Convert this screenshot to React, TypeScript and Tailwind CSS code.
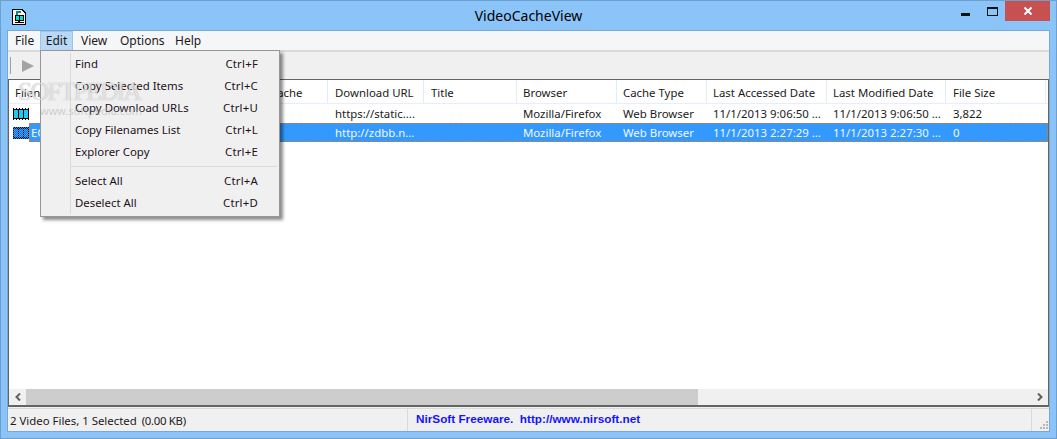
import React from "react";

const cols = [
  { w: "w-[121px]", p: "pl-[6px]", t: "Filename" },
  { w: "w-[134px]", p: "pl-[6px]", t: "Content Type" },
  { w: "w-[64px]", p: "pl-[6px]", t: "Cache" },
  { w: "w-[96px]", p: "pl-[7px]", t: "Download URL" },
  { w: "w-[93px]", p: "pl-[7px]", t: "Title" },
  { w: "w-[100px]", p: "pl-[6px]", t: "Browser" },
  { w: "w-[90px]", p: "pl-[6px]", t: "Cache Type" },
  { w: "w-[120px]", p: "pl-[6px]", t: "Last Accessed Date" },
  { w: "w-[119px]", p: "pl-[6px]", t: "Last Modified Date" },
  { w: "w-[100px]", p: "pl-[7px]", t: "File Size" },
];

const row1 = ["", "", "", "https://static....", "", "Mozilla/Firefox", "Web Browser", "11/1/2013 9:06:50 ...", "11/1/2013 9:06:50 ...", "3,822"];
const row2 = ["", "", "", "http://zdbb.n...", "", "Mozilla/Firefox", "Web Browser", "11/1/2013 2:27:29 ...", "11/1/2013 2:27:30 ...", "0"];

const items: ([string, string] | null)[] = [
  ["Find", "Ctrl+F"],
  ["Copy Selected Items", "Ctrl+C"],
  ["Copy Download URLs", "Ctrl+U"],
  ["Copy Filenames List", "Ctrl+L"],
  ["Explorer Copy", "Ctrl+E"],
  null,
  ["Select All", "Ctrl+A"],
  ["Deselect All", "Ctrl+D"],
];

function Film() {
  return (
    <svg width="16" height="12" viewBox="0 0 16 12" shapeRendering="crispEdges" className="shrink-0">
      <rect width="16" height="12" fill="#000" />
      {[1, 4, 7, 10, 13].map((x) => (
        <React.Fragment key={x}>
          <rect x={x} y="0" width="2" height="1" fill="#fff" />
          <rect x={x} y="11" width="2" height="1" fill="#fff" />
        </React.Fragment>
      ))}
      <rect x="1" y="2" width="4" height="8" fill="#1ec8f0" />
      <rect x="6" y="2" width="4" height="8" fill="#1ec8f0" />
      <rect x="11" y="2" width="4" height="8" fill="#1ec8f0" />
    </svg>
  );
}

function FilmSelected() {
  const cells: React.ReactNode[] = [];
  for (let y = 0; y < 12; y++) {
    for (let x = 0; x < 16; x++) {
      const frame = y >= 2 && y <= 9 && x % 5 !== 0;
      const odd = (x + y) % 2 === 1;
      const fill = odd ? (frame ? "#1c6fd6" : "#000") : frame ? "#3aa0ff" : "#2f8cf0";
      cells.push(<rect key={`${x}-${y}`} x={x} y={y} width="1" height="1" fill={fill} />);
    }
  }
  return (
    <svg width="16" height="12" viewBox="0 0 16 12" shapeRendering="crispEdges" className="shrink-0">
      {cells}
    </svg>
  );
}

function AppIcon() {
  return (
    <svg width="14" height="16" viewBox="0 0 14 16" shapeRendering="crispEdges">
      <path d="M0.5 0.5H10L13.5 4V15.5H0.5Z" fill="#f4f4e8" stroke="#000" />
      <path d="M4 2H9V4H6V6H4Z" fill="#0d8a8a" />
      <rect x="3.5" y="6.5" width="8" height="5" fill="#19d6d6" stroke="#000" />
      <rect x="7" y="7" width="1" height="5" fill="#000" />
      <rect x="3" y="13" width="9" height="1" fill="#000" />
      <rect x="6" y="12" width="2" height="1" fill="#000" />
    </svg>
  );
}

export default function App() {
  return (
    <div className="relative w-[1057px] h-[439px] overflow-hidden flex flex-col bg-[#8ac4f8] border border-[#6f9fcd] text-[11.4px] text-[#1a1a1a] [font-family:'Noto_Sans',sans-serif]">
      {/* Title bar */}
      <div className="h-[29px] shrink-0 grid grid-cols-[1fr_auto_1fr]">
        <div className="flex items-center pl-[11px] pt-[2px]">
          <AppIcon />
        </div>
        <div className="text-[14px] text-black leading-[30px] text-center">VideoCacheView</div>
        <div className="flex justify-end items-start h-[20px]">
          <div className="w-[9px] h-[20px] mr-[17px] flex items-end pb-[5px]">
            <div className="w-[9px] h-[3px] bg-[#111]" />
          </div>
          <div className="w-[11px] h-[20px] mr-[7px] flex items-center">
            <div className="w-[9px] h-[6px] box-content border border-[#111] border-t-[2px]" />
          </div>
          <div className="w-[45px] h-[20px] bg-[#c75050] flex items-center justify-center mr-[6px]">
            <svg width="10" height="10" viewBox="0 0 10 10">
              <path d="M1.5 1.5L8.5 8.5M8.5 1.5L1.5 8.5" stroke="#fff" strokeWidth="2" />
            </svg>
          </div>
        </div>
      </div>

      {/* Client */}
      <div className="flex-1 flex flex-col mx-[6px] mb-[6px] border border-[#7ca7d1] bg-[#f0f0f0] min-h-0">
        {/* Menu bar */}
        <div className="h-[20px] shrink-0 flex bg-[#f5f6f7] border-b border-[#d9d9d9] text-[12px]">
          <div className="h-[20px] w-[32px] pl-[7px] leading-[19px]">File</div>
          <div className="h-[20px] w-[33px] text-center leading-[18px] bg-[#b9d8f6] border border-[#9cc3e8] border-b-0">Edit</div>
          <div className="h-[20px] w-[39px] pl-[8px] leading-[19px]">View</div>
          <div className="h-[20px] w-[56px] pl-[8px] leading-[19px]">Options</div>
          <div className="h-[20px] pl-[7px] leading-[19px]">Help</div>
        </div>
        {/* Toolbar */}
        <div className="h-[28px] shrink-0 flex items-center border-t border-[#d9d9d9] pl-[2px]">
          <div className="w-[1px] h-[17px] bg-[#a0a0a0]" />
          <svg width="12" height="12" viewBox="0 0 12 12" className="ml-[11px]">
            <path d="M0 0L12 6L0 12Z" fill="#a3a3a3" />
          </svg>
        </div>
        {/* List */}
        <div className="flex-1 min-h-0 flex flex-col bg-white border border-[#646464] border-b-2">
          <div className="h-[24px] shrink-0 flex border-b border-[#e5eefa]">
            {cols.map((c) => (
              <div key={c.t} className={`${c.w} ${c.p} shrink-0 leading-[25px] whitespace-nowrap overflow-hidden border-r border-[#e3edf8]`}>
                {c.t}
              </div>
            ))}
          </div>
          <div className="h-[19px] shrink-0 flex">
            {row1.map((t, i) => (
              <div key={i} className={`${cols[i].w} ${cols[i].p} shrink-0 leading-[20px] whitespace-nowrap overflow-hidden flex items-center`}>
                {i === 0 ? <span className="-ml-[2px]"><Film /></span> : t}
              </div>
            ))}
          </div>
          <div className="h-[19px] shrink-0 flex">
            <div className="w-[20px] shrink-0 pl-[4px] flex items-center"><FilmSelected /></div>
            <div className="flex-1 flex bg-[#3399ff] text-[#f2f8ff] border border-dashed border-[#c77c3a]">
              <div className="w-[100px] shrink-0 pl-[1px] leading-[18px] overflow-hidden">EC</div>
              {row2.slice(1).map((t, i) => (
                <div key={i} className={`${cols[i + 1].w} ${cols[i + 1].p} shrink-0 leading-[18px] whitespace-nowrap overflow-hidden`}>
                  {t}
                </div>
              ))}
            </div>
          </div>
          <div className="flex-1" />
          {/* Scrollbar */}
          <div className="h-[16px] shrink-0 flex bg-[#f0f0f0]">
            <div className="w-[17px] flex items-center justify-center">
              <svg width="8" height="8" viewBox="0 0 8 8"><path d="M6 0.5L2.5 4L6 7.5" fill="none" stroke="#606060" strokeWidth="2" /></svg>
            </div>
            <div className="w-[672px] bg-[#cdcdcd]" />
            <div className="flex-1" />
            <div className="w-[17px] flex items-center justify-center">
              <svg width="8" height="8" viewBox="0 0 8 8"><path d="M2 0.5L5.5 4L2 7.5" fill="none" stroke="#606060" strokeWidth="2" /></svg>
            </div>
          </div>
        </div>
        {/* Status */}
        <div className="h-[23px] shrink-0 flex items-center border-t border-[#d9d9d9] mt-[1px]">
          <div className="w-[399px] pl-[2px] leading-[24px] h-full whitespace-nowrap">
            2 Video Files, 1 Selected&nbsp; <span className="tracking-[-0.3px] -ml-[1px]">(0.00 KB)</span>
          </div>
          <div className="flex-1 h-full border-l border-[#d9d9d9] pl-[8px] leading-[20px] font-bold text-[11.75px] text-[#1414ff] [font-family:'Liberation_Sans',sans-serif] whitespace-nowrap">
            NirSoft Freeware.&nbsp; http://www.nirsoft.net
          </div>
          <div className="relative w-[18px] h-full border-l border-[#d9d9d9]">
            <svg width="9" height="9" viewBox="0 0 9 9" shapeRendering="crispEdges" className="absolute right-0 bottom-[1px]">
              <path d="M6 0h2v2H6zM3 3h2v2H3zM6 3h2v2H6zM0 6h2v2H0zM3 6h2v2H3zM6 6h2v2H6z" fill="#b8b8b8" />
            </svg>
          </div>
        </div>
      </div>

      {/* Edit dropdown */}
      <div className="absolute left-[39px] top-[49px] w-[240px] h-[167px] bg-[#f0f0f0] border border-[#979797] shadow-[3px_3px_3px_rgba(0,0,0,0.45)] py-[2px] flex flex-col">
        <div className="absolute left-[29px] top-[2px] bottom-[2px] w-[1px] bg-[#d9d9d9]" />
        {items.map((it, i) =>
          it ? (
            <div key={i} className="h-[22px] shrink-0 flex justify-between items-center pl-[34px] pr-[21px] text-[#1d1020]">
              <span>{it[0]}</span>
              <span className="tracking-[0.2px]">{it[1]}</span>
            </div>
          ) : (
            <div key={i} className="h-[7px] shrink-0 ml-[30px] mr-[2px] flex items-center">
              <div className="w-full h-[1px] bg-[#d9d9d9]" />
            </div>
          )
        )}
      </div>

      {/* Watermark */}
      <div className="absolute left-[17px] top-[71px] pointer-events-none text-[26px] tracking-[-2px] text-white/70 [text-shadow:0_0_1px_rgba(90,90,90,0.55)] [font-family:'Liberation_Serif',serif] whitespace-nowrap">SOFTPEDIA</div>
      <div className="absolute left-[39px] top-[102px] pointer-events-none text-[11px] text-[#aaaaaa]/50 whitespace-nowrap">www.softpedia.com</div>
    </div>
  );
}
